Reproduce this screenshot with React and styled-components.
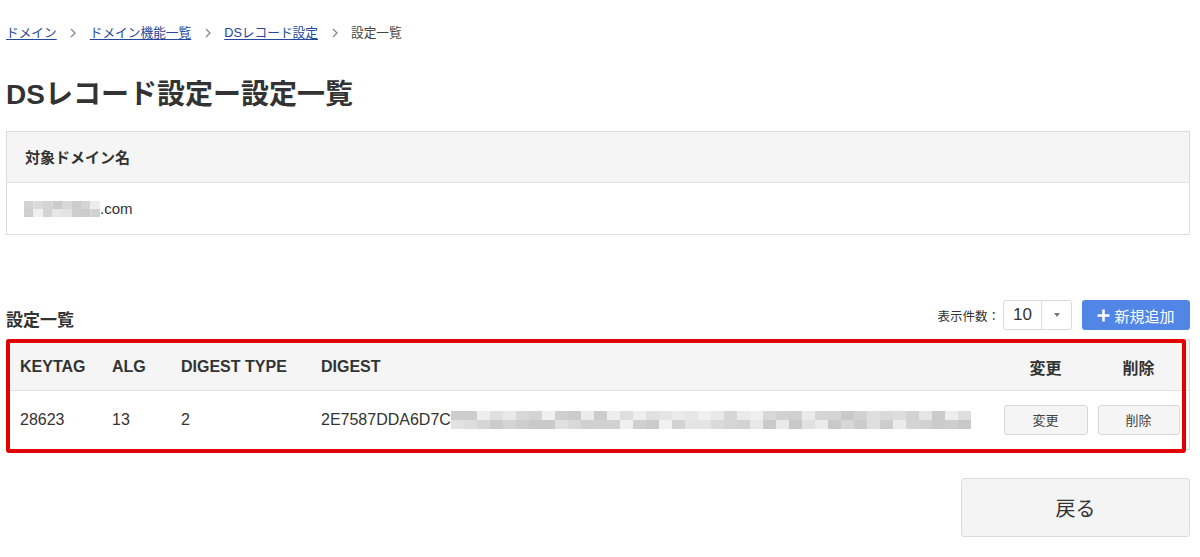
import React from 'react';
import styled, {createGlobalStyle} from 'styled-components';

const GlobalStyle = createGlobalStyle`
  body {
    margin: 0;
    background: #fff;
    color: #333;
    font-family: "Liberation Sans", "Noto Sans CJK JP", sans-serif;
  }
`;

const Page = styled.div`
  padding: 24px 10px 20px 6px;
`;

const Breadcrumb = styled.nav`
  display: flex;
  align-items: center;
  gap: 12.5px;
  font-size: 12.7px;
  line-height: 18px;
`;

const Crumb = styled.a`
  color: #24479a;
  text-decoration: underline;
  text-underline-offset: 2px;
`;

const Current = styled.span`
  color: #444;
`;

const Chevron = styled.svg`
  width: 8px;
  height: 10px;
  stroke: #888;
  fill: none;
  stroke-width: 1.3;
`;

const Title = styled.h1`
  margin: 33px 0 0;
  font-size: 28px;
  line-height: 40px;
  font-weight: 700;
  color: #333;
`;

const InfoBox = styled.div`
  margin-top: 16px;
  border: 1px solid #dcdcdc;
`;

const InfoHead = styled.div`
  height: 51px;
  display: flex;
  align-items: center;
  padding: 0 0 2px 18px;
  box-sizing: border-box;
  background: #f5f5f5;
  border-bottom: 1px solid #e2e2e2;
  font-size: 15px;
  font-weight: 700;
`;

const InfoBody = styled.div`
  height: 51px;
  display: flex;
  align-items: center;
  padding-left: 17px;
  font-size: 15px;
`;

const Toolbar = styled.div`
  margin-top: 65px;
  display: flex;
  align-items: center;
  justify-content: space-between;
  height: 30px;
`;

const SectionTitle = styled.h2`
  margin: 6px 0 0;
  font-size: 17px;
  font-weight: 700;
`;

const Controls = styled.div`
  display: flex;
  align-items: center;
`;

const Label = styled.span`
  font-size: 12.5px;
  color: #333;
  margin-right: 3px;
`;

const Select = styled.div`
  width: 67px;
  height: 28px;
  border: 1px solid #dadada;
  border-radius: 3px;
  display: flex;
  background: #fff;
  margin-right: 10px;
`;

const SelectValue = styled.span`
  width: 37px;
  display: flex;
  align-items: center;
  justify-content: center;
  font-size: 17px;
  border-right: 1px solid #e0e0e0;
`;

const SelectArrow = styled.span`
  flex: 1;
  display: flex;
  align-items: center;
  justify-content: center;
  &::after {
    content: "";
    border-left: 3.5px solid transparent;
    border-right: 3.5px solid transparent;
    border-top: 4px solid #777;
  }
`;

const AddButton = styled.button`
  width: 108px;
  height: 30px;
  border: none;
  border-radius: 3px;
  background: #5286e6;
  color: #fff;
  font-family: inherit;
  font-size: 15px;
  display: flex;
  align-items: center;
  justify-content: center;
  gap: 4px;
  padding: 0;
`;

const TableWrap = styled.div`
  position: relative;
  margin-top: 9px;
`;

const Table = styled.div`
  border: 1px solid #dcdcdc;
`;

const Row = styled.div`
  display: grid;
  grid-template-columns: 92px 69px 140px 1fr 93px 93px;
  align-items: center;
  padding: ${p => p.$head ? '3px 4px 0 13px' : '0 4px 1px 13px'};
  box-sizing: border-box;
  height: ${p => p.$height}px;
  background: ${p => p.$head ? '#f5f5f5' : '#fff'};
  border-bottom: ${p => p.$head ? '1px solid #e2e2e2' : 'none'};
  font-size: 16px;
  font-weight: ${p => p.$head ? 700 : 400};
`;

const Cell = styled.div`
  display: flex;
  align-items: center;
  justify-content: ${p => p.$center ? 'center' : 'flex-start'};
  white-space: nowrap;
`;

const SmallButton = styled.button`
  width: ${p => p.$w}px;
  height: 30px;
  border: 1px solid #d8d8d8;
  border-radius: 3px;
  background: #f5f5f5;
  color: #444;
  font-family: inherit;
  font-size: 13px;
  padding: 0;
`;

const Highlight = styled.div`
  position: absolute;
  top: 0;
  left: 0;
  right: 4px;
  bottom: -3px;
  border: 4px solid #e20000;
  border-radius: 3px;
  pointer-events: none;
`;

const Footer = styled.div`
  margin-top: 28px;
  display: flex;
  justify-content: flex-end;
`;

const BackButton = styled.button`
  width: 229px;
  height: 59px;
  border: 1px solid #dcdcdc;
  border-radius: 3px;
  background: #f4f4f4;
  color: #333;
  font-family: inherit;
  font-size: 20px;
`;

// deterministic grey "mosaic" that stands in for the blurred values
const shade = (i, seed) => {
  const v = Math.abs(Math.sin(i * 12.9898 + seed * 78.233) * 43758.5453) % 1;
  return Math.round(200 + v * 42);
};

const Mosaic = ({cols, cell, rows, rowH, seed}) => (
  <svg width={cols * cell} height={rows * rowH} style={{display: 'block'}}>
    {Array.from({length: rows * cols}).map((_, i) => {
      const g = shade(i, seed);
      return (
        <rect key={i} x={(i % cols) * cell} y={Math.floor(i / cols) * rowH}
              width={cell} height={rowH} fill={`rgb(${g},${g},${g})`}/>
      );
    })}
  </svg>
);

const Sep = () => (
  <Chevron viewBox="0 0 8 10"><path d="M2 1l4 4-4 4"/></Chevron>
);

const App = () => {
  return (
    <Page>
      <GlobalStyle/>
      <Breadcrumb>
        <Crumb>ドメイン</Crumb>
        <Sep/>
        <Crumb>ドメイン機能一覧</Crumb>
        <Sep/>
        <Crumb>DSレコード設定</Crumb>
        <Sep/>
        <Current>設定一覧</Current>
      </Breadcrumb>

      <Title>DSレコード設定ー設定一覧</Title>

      <InfoBox>
        <InfoHead>対象ドメイン名</InfoHead>
        <InfoBody>
          <Mosaic cols={8} cell={9.5} rows={2} rowH={8} seed={3}/>
          <span>.com</span>
        </InfoBody>
      </InfoBox>

      <Toolbar>
        <SectionTitle>設定一覧</SectionTitle>
        <Controls>
          <Label>表示件数：</Label>
          <Select>
            <SelectValue>10</SelectValue>
            <SelectArrow/>
          </Select>
          <AddButton>
            <svg width="13" height="13" viewBox="0 0 13 13">
              <path d="M6.5 0.5v12M0.5 6.5h12" stroke="#fff" strokeWidth="2.6"/>
            </svg>
            新規追加
          </AddButton>
        </Controls>
      </Toolbar>

      <TableWrap>
        <Table>
          <Row $head $height={51}>
            <Cell>KEYTAG</Cell>
            <Cell>ALG</Cell>
            <Cell>DIGEST TYPE</Cell>
            <Cell>DIGEST</Cell>
            <Cell $center>変更</Cell>
            <Cell $center>削除</Cell>
          </Row>
          <Row $height={58}>
            <Cell>28623</Cell>
            <Cell>13</Cell>
            <Cell>2</Cell>
            <Cell>
              2E7587DDA6D7C
              <Mosaic cols={40} cell={13} rows={2} rowH={9} seed={7}/>
            </Cell>
            <Cell $center><SmallButton $w={84}>変更</SmallButton></Cell>
            <Cell $center><SmallButton $w={82}>削除</SmallButton></Cell>
          </Row>
        </Table>
        <Highlight/>
      </TableWrap>

      <Footer>
        <BackButton>戻る</BackButton>
      </Footer>
    </Page>
  );
};

export default App;
